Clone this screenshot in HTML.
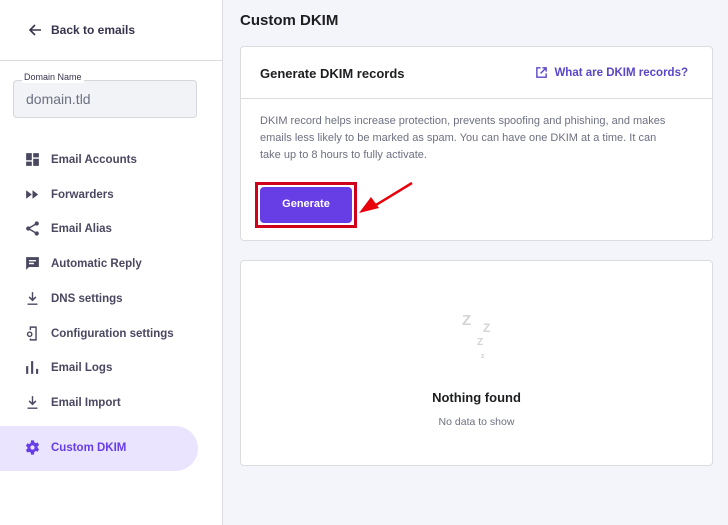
<!DOCTYPE html>
<html><head><style>
*{box-sizing:border-box;margin:0;padding:0}
body{width:728px;height:525px;overflow:hidden;background:#f4f4fb;font-family:"Liberation Sans",sans-serif;position:relative;color:#2f1c6a}
.side{position:absolute;left:0;top:0;width:223px;height:525px;background:#fff;border-right:1px solid #dadce0}
.back{position:absolute;left:28px;top:23px;font-size:12px;font-weight:bold;color:#36344d;display:flex;align-items:center;gap:9px}
.hr{position:absolute;left:0;top:60px;width:223px;height:1px;background:#dadce0}
.field{position:absolute;left:13px;top:80px;width:184px;height:38px;background:#f2f3f6;border:1px solid #d5d7dc;border-radius:4px;font-size:14px;color:#6d7081;padding:10px 12px}
.lbl{position:absolute;left:22px;top:72px;font-size:9px;color:#36344d;background:#fff;padding:0 2px;line-height:11px}
.item{position:absolute;left:24px;font-size:11.5px;font-weight:bold;color:#4a4860;display:flex;align-items:center;gap:10px}
.item svg{width:17px;height:17px;fill:#4a4860}
.active{position:absolute;left:0;top:426px;width:198px;height:45px;background:#ebe4ff;border-radius:0 23px 23px 0}
h1{position:absolute;left:240px;top:12px;font-size:15px;font-weight:bold;color:#1d1e20}
.card{position:absolute;left:240px;width:473px;background:#fff;border:1px solid #dadce0;border-radius:4px}
.c1{top:46px;height:195px}
.c2{top:260px;height:206px}
.ch{height:52px;border-bottom:1px solid #dadce0;padding:19px 19px;font-size:13px;font-weight:bold;color:#1d1e20;position:relative}
.link{position:absolute;right:24px;top:19px;font-size:11.5px;color:#5b45c8;display:flex;gap:6px;align-items:center}
.desc{position:absolute;left:19px;top:66px;width:410px;font-size:11px;line-height:17px;color:#6d7081}
.btn{position:absolute;left:14px;top:135px;width:102px;height:46px;border:3px solid #d0021b;padding:2px}
.btn div{width:100%;height:100%;background:#673de6;border-radius:4px;color:#fff;font-size:11px;font-weight:bold;text-align:center;line-height:35px}
.nf{position:absolute;left:0;width:100%;text-align:center}
.z{position:absolute;font-weight:bold;color:#d4d4d4}
</style></head><body>
<div class="side">
<div class="back"><svg width="14" height="14" viewBox="0 0 14 14"><path d="M13 7H2M7 2L2 7l5 5" stroke="#36344d" stroke-width="1.6" fill="none"/></svg>Back to emails</div>
<div class="hr"></div>
<div class="field">domain.tld</div>
<div class="lbl">Domain Name</div>
<div class="item" style="top:151px"><svg viewBox="0 0 24 24"><path d="M3 3h8v10H3zM13 3h8v6h-8zM13 11h8v10h-8zM3 15h8v6H3z"/></svg>Email Accounts</div>
<div class="item" style="top:186px"><svg viewBox="0 0 24 24"><path d="M3 6l8 6-8 6zM12 6l8 6-8 6z"/></svg>Forwarders</div>
<div class="item" style="top:220px"><svg viewBox="0 0 24 24"><circle cx="18" cy="5" r="3"/><circle cx="6" cy="12" r="3"/><circle cx="18" cy="19" r="3"/><path d="M18 5L6 12l12 7" stroke="#4a4860" stroke-width="2" fill="none"/></svg>Email Alias</div>
<div class="item" style="top:255px"><svg viewBox="0 0 24 24"><path d="M3 3h18v14H7l-4 4zM7 7h10v2H7zm0 4h7v2H7z" fill-rule="evenodd"/></svg>Automatic Reply</div>
<div class="item" style="top:290px"><svg viewBox="0 0 24 24"><path d="M11 3h2v9l3-3 1.5 1.5L12 16l-5.5-5.5L8 9l3 3zM5 19h14v2H5z"/></svg>DNS settings</div>
<div class="item" style="top:325px"><svg viewBox="0 0 24 24"><path d="M8 2h10v20H8v-3h2v1h6V4h-6v3H8z"/><circle cx="8" cy="13" r="3" fill="none" stroke="#4a4860" stroke-width="2"/></svg>Configuration settings</div>
<div class="item" style="top:359px"><svg viewBox="0 0 24 24"><path d="M3 10h3v11H3zM10 3h3v18h-3zM17 14h3v7h-3z"/></svg>Email Logs</div>
<div class="item" style="top:394px"><svg viewBox="0 0 24 24"><path d="M11 3h2v9l3-3 1.5 1.5L12 16l-5.5-5.5L8 9l3 3zM5 19h14v2H5z"/></svg>Email Import</div>
<div class="active"></div>
<div class="item" style="top:439px;color:#673de6"><svg viewBox="0 0 24 24" style="fill:#673de6"><path d="M10 2h4l.6 2.8 2 1.1 2.7-.9 2 3.4-2.1 1.9v2.3l2.1 1.9-2 3.4-2.7-.9-2 1.1L14 22h-4l-.6-2.8-2-1.1-2.7.9-2-3.4 2.1-1.9V11.4L2.7 9.5l2-3.4 2.7.9 2-1.1zM12 9a3 3 0 100 6 3 3 0 000-6z" fill-rule="evenodd"/></svg>Custom DKIM</div>
</div>
<h1>Custom DKIM</h1>
<div class="card c1">
<div class="ch">Generate DKIM records<div class="link"><svg width="13" height="13" viewBox="0 0 14 14"><path d="M6 2H2v10h10V8M8 2h4v4M12 2L6 8" stroke="#5b45c8" stroke-width="1.5" fill="none"/></svg>What are DKIM records?</div></div>
<div class="desc">DKIM record helps increase protection, prevents spoofing and phishing, and makes emails less likely to be marked as spam. You can have one DKIM at a time. It can take up to 8 hours to fully activate.</div>
<div class="btn"><div>Generate</div></div>
<svg style="position:absolute;left:116px;top:133px" width="60" height="40" viewBox="0 0 60 40"><path d="M55 3L14 28" stroke="#e8000b" stroke-width="2.5"/><path d="M2 33l12-16 8 11z" fill="#e8000b"/></svg>
</div>
<div class="card c2">
<div class="z" style="left:221px;top:51px;font-size:15px">Z</div>
<div class="z" style="left:242px;top:60px;font-size:12px">Z</div>
<div class="z" style="left:236px;top:76px;font-size:10px">Z</div>
<div class="z" style="left:240px;top:92px;font-size:7px">z</div>
<div class="nf" style="top:129px;font-size:13px;font-weight:bold;color:#1d1e20">Nothing found</div>
<div class="nf" style="top:155px;font-size:10.5px;color:#6d7081">No data to show</div>
</div>
</body></html>
